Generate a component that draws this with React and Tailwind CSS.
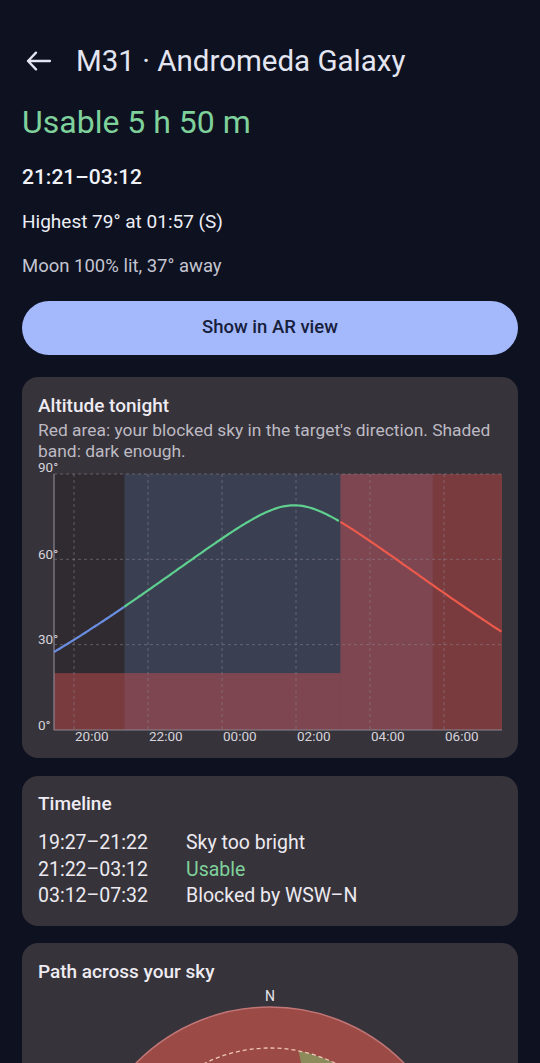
import React from 'react';

const FONT = { fontFamily: 'Roboto, "Noto Sans", sans-serif' };

// chart geometry (svg coords)
const PL = 16, PR = 464, PT = 12, PB = 268;
const HOUR = 37; // px per hour
const X20 = 36; // 20:00 grid line

const tx = (h) => X20 + (h - 20) * HOUR;
const ay = (alt) => PB - (alt / 90) * (PB - PT);

// altitude of M31 for lat 52.27
const rad = Math.PI / 180;
const altAt = (h) => {
  let H = (h - 25.95) * 15 * 1.0027;
  const lat = 52.27 * rad, dec = 41.27 * rad;
  const s = Math.sin(lat) * Math.sin(dec) + Math.cos(lat) * Math.cos(dec) * Math.cos(H * rad);
  return Math.asin(s) / rad;
};

const curve = (h0, h1) => {
  const pts = [];
  for (let h = h0; h <= h1 + 0.0001; h += 0.05) {
    const hh = Math.min(h, h1);
    pts.push(`${tx(hh).toFixed(1)},${ay(altAt(hh)).toFixed(1)}`);
  }
  return 'M' + pts.join(' L');
};

const START = 20 - 20 / HOUR; // 19:27
const END = 30 + (PR - (X20 + 10 * HOUR)) / HOUR; // 07:32
const DARK = 21.36;
const BLOCK = 27.2;
const TWI = 29.7;
const HORIZON = 20;

const AltitudeChart = () => {
  const grid = [0, 1, 2, 3, 4, 5];
  const labels = ['20:00', '22:00', '00:00', '02:00', '04:00', '06:00'];
  return (
    <svg width="464" height="286" style={{ ...FONT, overflow: 'visible' }} className="block">
      {/* dark-enough band */}
      <rect x={tx(DARK)} y={PT} width={tx(TWI) - tx(DARK)} height={PB - PT} fill="#3a3f52" />
      <rect x={PL} y={PT} width={tx(DARK) - PL} height={PB - PT} fill="#302b31" />
      <rect x={tx(TWI)} y={PT} width={PR - tx(TWI)} height={PB - PT} fill="#302b31" />
      {/* blocked sky */}
      <rect x={PL} y={ay(HORIZON)} width={tx(BLOCK) - PL} height={PB - ay(HORIZON)} fill="rgb(210,80,80)" fillOpacity="0.45" />
      <rect x={tx(BLOCK)} y={PT} width={PR - tx(BLOCK)} height={PB - PT} fill="rgb(210,80,80)" fillOpacity="0.45" />
      {/* grid */}
      {grid.map((i) => (
        <line key={i} x1={X20 + i * 74} x2={X20 + i * 74} y1={PT} y2={PB} stroke="#8a8590" strokeOpacity="0.55" strokeDasharray="3 3" strokeWidth="1" />
      ))}
      {[90, 60, 30].map((a) => (
        <line key={a} x1={PL} x2={PR} y1={ay(a)} y2={ay(a)} stroke="#8a8590" strokeOpacity="0.55" strokeDasharray="3 3" strokeWidth="1" />
      ))}
      <line x1={PL} x2={PL} y1={PT} y2={PB} stroke="#8a8590" strokeWidth="1.2" />
      <line x1={PL} x2={PR} y1={PB} y2={PB} stroke="#8a8590" strokeWidth="1.2" />
      {/* curve */}
      <path d={curve(START, DARK)} fill="none" stroke="#6a8fe2" strokeWidth="2.2" />
      <path d={curve(DARK, BLOCK)} fill="none" stroke="#5fd08f" strokeWidth="2.2" />
      <path d={curve(BLOCK, END)} fill="none" stroke="#ec5a4c" strokeWidth="2.2" />
      {/* axis labels */}
      {[['90°', 10], ['60°', 97], ['30°', 182], ['0°', 268]].map(([t, y]) => (
        <text key={t} x="0" y={y} fontSize="13.5" fill="#d6d3da">{t}</text>
      ))}
      {labels.map((t, i) => (
        <text key={t} x={X20 + i * 74 + 1} y="279" fontSize="13.5" fill="#d6d3da">{t}</text>
      ))}
    </svg>
  );
};

const SkyPath = () => (
  <svg width="464" height="80" style={FONT} className="block">
    <defs>
      <clipPath id="inner">
        <circle cx="232" cy="211" r="147" />
      </clipPath>
    </defs>
    <text x="232" y="17" fontSize="14" fill="#e6e3ea" textAnchor="middle">N</text>
    <circle cx="232" cy="211" r="188" fill="#9b4a45" stroke="#c07676" strokeWidth="1.5" />
    <polygon points="259,60 330,60 360,120 272,120" fill="#8d8a5c" clipPath="url(#inner)" />
    <circle cx="232" cy="211" r="147" fill="none" stroke="#f1c9b8" strokeWidth="1.3" strokeDasharray="4 3" />
  </svg>
);

export default function App() {
  return (
    <div className="min-h-[1063px] bg-[#0e1120] px-[22px] pt-[41px] overflow-hidden" style={FONT}>
      <div className="flex items-center h-[40px]">
        <svg width="26" height="20" viewBox="0 0 26 20" className="ml-[4px]">
          <path d="M2 10 H24 M10 1.6 L2 10 L10 18.4" fill="none" stroke="#e3e5f1" strokeWidth="2.3" strokeLinecap="round" strokeLinejoin="round" />
        </svg>
        <h1 className="ml-[24px] text-[29.5px] leading-[40px] text-[#e3e5f1]">M31 · Andromeda Galaxy</h1>
      </div>

      <div className="mt-[21px] text-[32px] leading-[40px] text-[#7fd19b]">Usable 5 h 50 m</div>
      <div className="mt-[21px] text-[21px] leading-[28px] font-medium text-[#f1f2f8]">21:21–03:12</div>
      <div className="mt-[18px] text-[19px] leading-[26px] text-[#eceef6]">Highest 79° at 01:57 (S)</div>
      <div className="mt-[18px] text-[18.5px] leading-[26px] text-[#c3c5d1]">Moon 100% lit, 37° away</div>

      <button className="mt-[22px] w-full h-[54px] rounded-full bg-[#a4b9fb] text-[#16203d] text-[18.5px] font-medium">
        Show in AR view
      </button>

      <div className="mt-[22px] rounded-2xl bg-[#36333a] px-[16px] pt-[16px] pb-[10px]">
        <div className="text-[19px] leading-[26px] font-medium text-[#eeebf2]">Altitude tonight</div>
        <div className="mt-[1px] text-[17.4px] leading-[21px] text-[#bdbac3]">
          Red area: your blocked sky in the target's direction. Shaded band: dark enough.
        </div>
        <AltitudeChart />
      </div>

      <div className="mt-[18px] rounded-2xl bg-[#36333a] px-[16px] pt-[16px] pb-[16px]">
        <div className="text-[19px] leading-[24px] font-medium text-[#eeebf2]">Timeline</div>
        <div className="mt-[14px] text-[19.5px] leading-[26.5px] text-[#eceaf0]">
          <div className="flex"><span className="w-[148px]">19:27–21:22</span><span>Sky too bright</span></div>
          <div className="flex"><span className="w-[148px]">21:22–03:12</span><span className="text-[#7fd19b]">Usable</span></div>
          <div className="flex"><span className="w-[148px]">03:12–07:32</span><span>Blocked by WSW–N</span></div>
        </div>
      </div>

      <div className="mt-[17px] rounded-2xl bg-[#36333a] px-[16px] pt-[17px] pb-[20px]">
        <div className="text-[19px] leading-[24px] font-medium text-[#eeebf2]">Path across your sky</div>
        <SkyPath />
      </div>
    </div>
  );
}
